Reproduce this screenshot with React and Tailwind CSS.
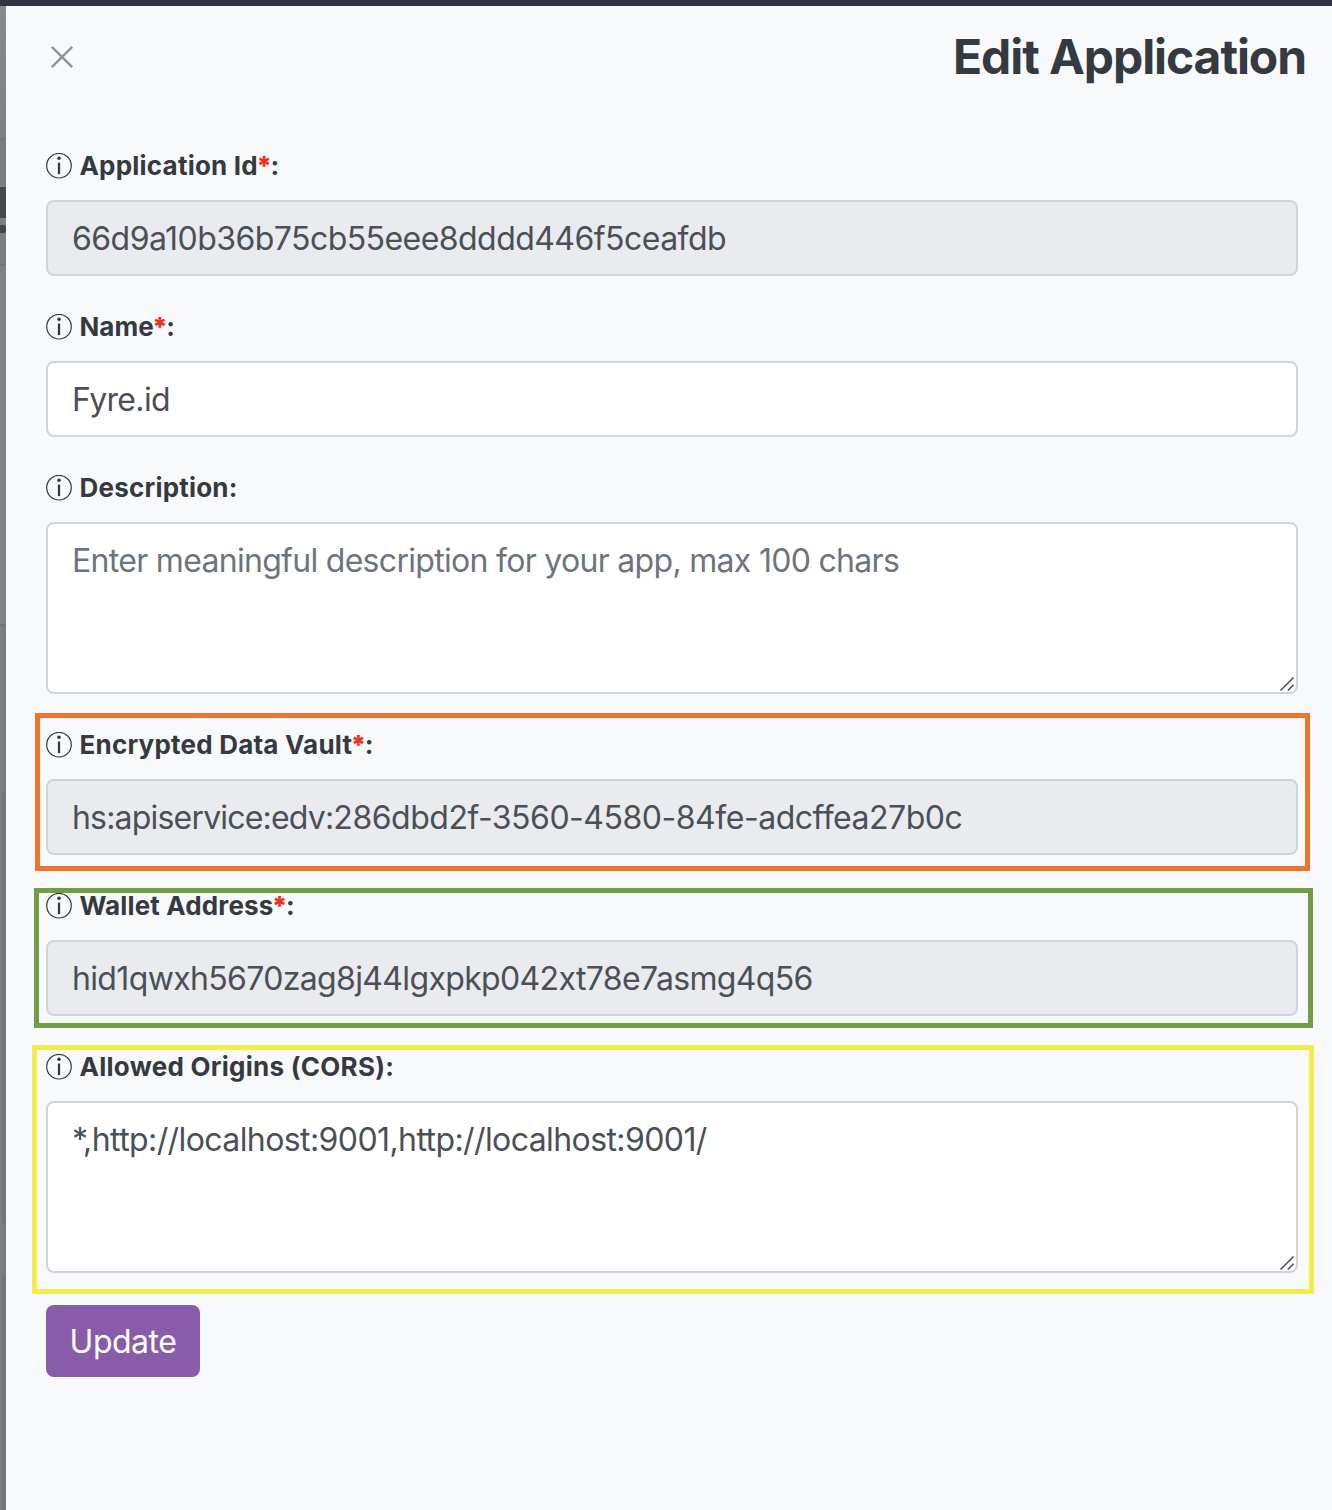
function InfoIcon() {
  return (
    <svg className="size-[26px] shrink-0" viewBox="0 0 26 26" fill="none">
      <circle cx="13" cy="12.7" r="12.3" stroke="#343a40" strokeWidth="1.2" />
      <circle cx="13" cy="5.3" r="1.8" fill="#343a40" />
      <path d="M13 9.6V21.1" stroke="#343a40" strokeWidth="2.3" />
    </svg>
  );
}

function Label({ text, required, tracking = "tracking-[0.21px]" }) {
  return (
    <div className="flex h-[26px] items-center text-[26px] leading-[26px] font-bold text-[#343a40]">
      <InfoIcon />
      <span className={"ml-[7.5px] whitespace-pre " + tracking}>
        {text}
        {required && (
          <span className="inline-flex w-[12.5px] justify-center font-black text-[#f0311f]">*</span>
        )}
        :
      </span>
    </div>
  );
}

function Field({ children, tall, disabled, tone = "text-[#495057]", tracking }) {
  return (
    <div
      className={
        "relative mt-[21px] rounded-lg border-2 border-[#ced4da] px-6 pt-[13px] text-[32px] leading-[48px] whitespace-nowrap " +
        (tall ? "h-[172px] " : "h-[76px] ") +
        (disabled ? "bg-[#eaebef] " : "bg-white ") +
        tone +
        " " +
        tracking
      }
    >
      {children}
      {tall && (
        <svg className="absolute right-[2px] bottom-[1px] size-4" viewBox="0 0 16 16" fill="none">
          <path d="M2.5 15.5L15.5 2.5M9.8 15.5L15.5 9.8" stroke="#5a5a5a" strokeWidth="1.6" />
        </svg>
      )}
    </div>
  );
}

// Sliver of the dimmed page that stays visible beside the panel.
function Backdrop() {
  return (
    <div className="flex w-1.5 shrink-0 flex-col overflow-hidden bg-[#808184]">
      <div className="h-[132px] bg-linear-to-b from-[#848a8b] to-[#7f7f83]" />
      <div className="h-1 bg-linear-to-b from-[#6f7173] to-[#7b8081]" />
      <div className="h-[45px] bg-[#7a8082]" />
      <div className="h-[31px] bg-[#43484a]" />
      <div className="flex h-[46px] items-start bg-[#7a8082] pt-[7px]">
        <div className="h-2 w-1.5 rounded-r-[2px] bg-[#43484a]" />
      </div>
      <div className="h-0.5 bg-[#6f7476]" />
      <div className="h-[358px] bg-[#808184]" />
      <div className="h-0.5 bg-[#6f7476]" />
      <div className="h-[166px] bg-linear-to-r from-[#7c8183] to-[#75797b]" />
      <div className="h-[431px] rounded-tr-[3px] border-r-4 border-[#717577] bg-[#7a7f81]" />
      <div className="h-[52px] bg-linear-to-r from-[#7c8183] to-[#75797b]" />
      <div className="flex-1 border-r-4 border-[#717577] bg-[#7a7f81]" />
    </div>
  );
}

export default function App() {
  return (
    <div className="flex h-[1510px] w-[1332px] flex-col overflow-hidden bg-[#f8f9fb] font-['Inter',sans-serif]">
      <div className="h-1.5 shrink-0 bg-[#323445]" />
      <div className="flex flex-1">
        <Backdrop />
        <main className="flex-1 pr-[34px] pl-10">
          <header className="-mr-[7px] flex h-[147px] items-start justify-between">
            <svg className="mt-[39px] ml-1 size-6" viewBox="0 0 24 24" fill="none">
              <path d="M1.8 1.8L22.2 22.2M22.2 1.8L1.8 22.2" stroke="#919596" strokeWidth="2.5" />
            </svg>
            <h1 className="mt-[21px] -mr-px text-[48px] leading-[60px] font-bold tracking-[-1.08px] text-[#343a40]">
              Edit Application
            </h1>
          </header>

          <Label text="Application Id" required />
          <Field disabled tracking="tracking-[-0.55px]">66d9a10b36b75cb55eee8dddd446f5ceafdb</Field>

          <div className="mt-[38px]">
            <Label text="Name" required tracking="tracking-[0px]" />
            <Field tracking="tracking-[-0.65px]">Fyre.id</Field>
          </div>

          <div className="mt-[38px]">
            <Label text="Description" tracking="tracking-[0.2px]" />
            <Field tall tone="text-[#6c757d]" tracking="tracking-[-0.7px]">
              Enter meaningful description for your app, max 100 chars
            </Field>
          </div>

          <section className="mt-[19px] -mr-3 -ml-[11px] border-5 border-[#ec742f] pt-[14px] pr-[7px] pb-[11px] pl-1.5">
            <Label text="Encrypted Data Vault" required />
            <Field disabled tracking="tracking-[-0.48px]">
              <span className="tracking-[-0.81px]">hs:apiservice:edv:</span>286dbd2f-3560-4580-84fe-adcffea27b0c
            </Field>
          </section>

          <section className="mt-[17px] -mr-[15px] -ml-3 border-5 border-[#729c45] pr-2.5 pb-[7px] pl-[7px]">
            <Label text="Wallet Address" required tracking="tracking-[0.14px]" />
            <Field disabled tracking="tracking-[-0.65px]">hid1qwxh5670zag8j44lgxpkp042xt78e7asmg4q56</Field>
          </section>

          <section className="mt-[17px] -mr-4 -ml-[14px] border-5 border-[#f4eb4d] pt-1 pr-[11px] pb-4 pl-[9px]">
            <Label text="Allowed Origins (CORS)" tracking="tracking-[0.26px]" />
            <Field tall tracking="tracking-[-0.59px]">*,http://localhost:9001,http://localhost:9001/</Field>
          </section>

          <button className="mt-[11px] flex h-[72px] w-[154px] items-center justify-center rounded-lg bg-[#895ca9] pt-0.5 text-[32px] leading-[48px] tracking-[-0.5px] text-white">
            Update
          </button>
        </main>
      </div>
    </div>
  );
}
